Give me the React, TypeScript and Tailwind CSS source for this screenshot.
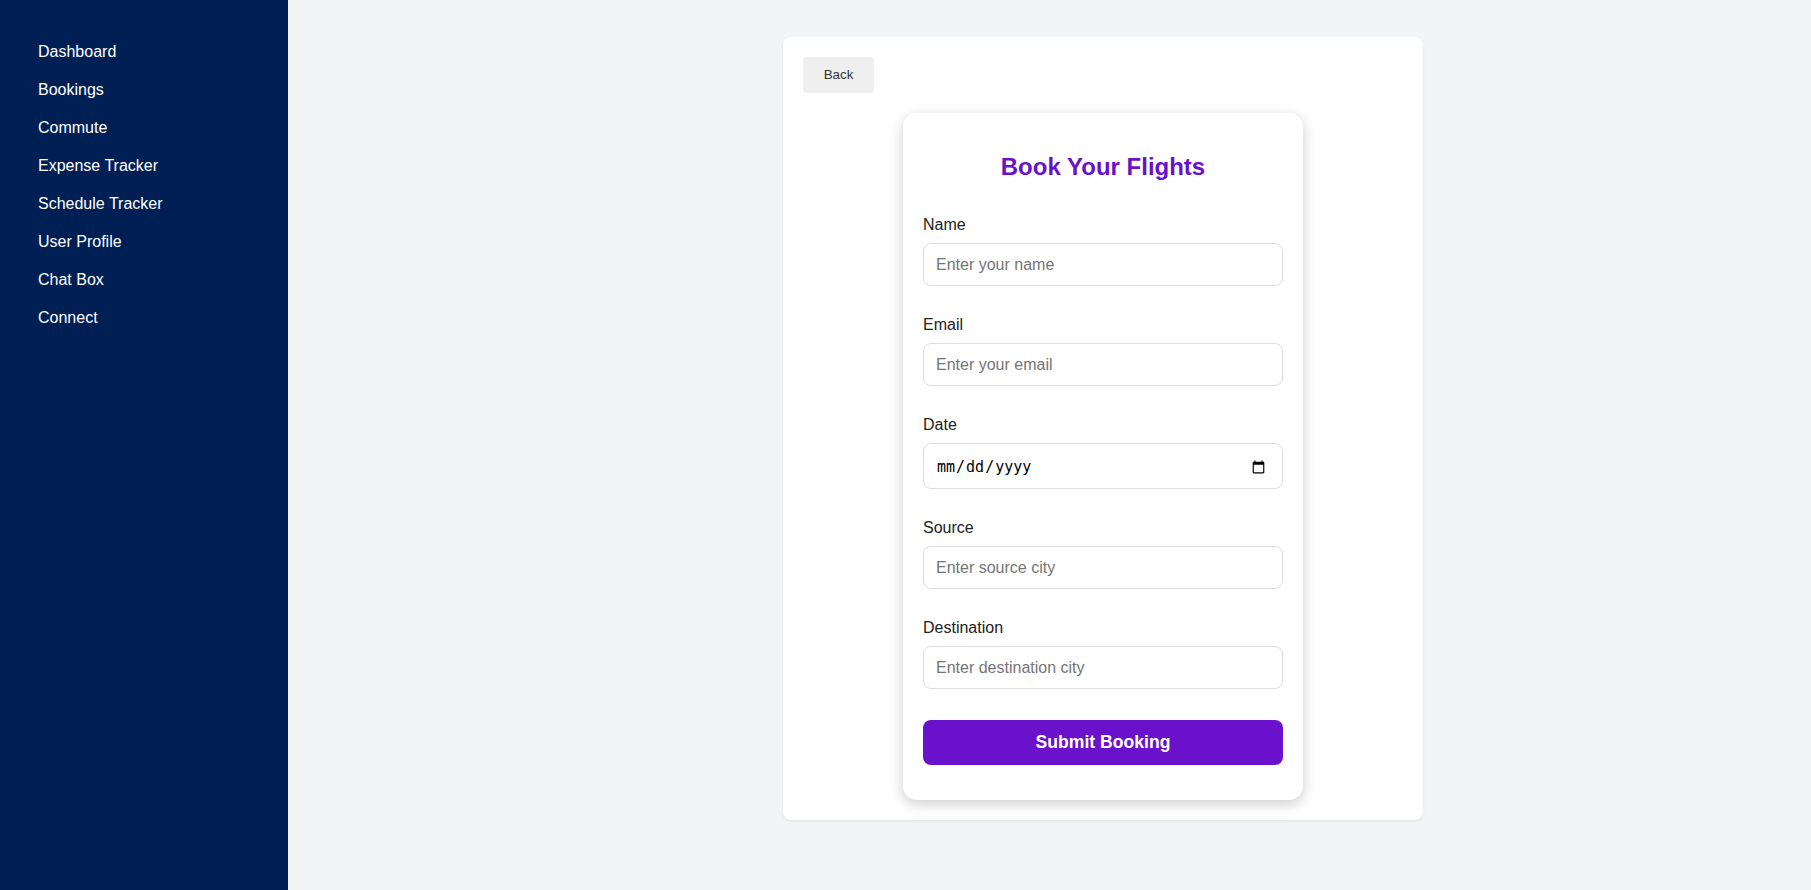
import React from "react";

const navItems = [
  "Dashboard",
  "Bookings",
  "Commute",
  "Expense Tracker",
  "Schedule Tracker",
  "User Profile",
  "Chat Box",
  "Connect",
];

function Field({
  label,
  placeholder,
  type = "text",
  last = false,
}: {
  label: string;
  placeholder?: string;
  type?: string;
  last?: boolean;
}) {
  const isDate = type === "date";
  return (
    <div className={last ? "" : "mb-[30px]"}>
      <label className="block text-[16px] leading-[18px] text-[#222] mb-[9px]">{label}</label>
      <input
        type={type}
        placeholder={placeholder}
        className={
          isDate
            ? "block w-full h-[46px] border border-[#ddd] rounded-lg pl-[12px] pr-[14px] pt-[3px] text-[15px] text-black outline-none [font-family:'DejaVu_Sans_Mono','Liberation_Mono',monospace]"
            : "block w-full h-[43px] border border-[#ddd] rounded-lg px-[12px] text-[16px] text-black placeholder:text-[#757575] outline-none"
        }
      />
    </div>
  );
}

export default function App() {
  return (
    <div className="flex w-full h-[890px] [font-family:'Liberation_Sans',Arial,sans-serif]">
      <aside className="w-[288px] shrink-0 bg-[#001f54] pt-[43px] pl-[38px]">
        <ul className="flex flex-col gap-[20px]">
          {navItems.map((n) => (
            <li key={n} className="text-white text-[16px] leading-[18px]">
              {n}
            </li>
          ))}
        </ul>
      </aside>
      <main className="flex-1 bg-[#f3f4f6] pt-[37px] pl-[495px]">
        <div className="w-[640px] bg-white rounded-lg shadow-[0_1px_3px_rgba(0,0,0,0.08)] p-5">
          <button className="w-[71px] h-[36px] bg-[#efefef] rounded text-[13.33px] text-[#333]">
            Back
          </button>
          <div className="mt-5 mx-auto w-[400px] bg-white rounded-[14px] shadow-[0_4px_14px_rgba(0,0,0,0.2)] px-[20px] pt-[40px] pb-[35px]">
            <h2 className="text-center text-[24px] leading-[28px] font-bold text-[#6a11cb] mb-[35px]">
              Book Your Flights
            </h2>
            <Field label="Name" placeholder="Enter your name" />
            <Field label="Email" placeholder="Enter your email" type="email" />
            <Field label="Date" type="date" />
            <Field label="Source" placeholder="Enter source city" />
            <Field label="Destination" placeholder="Enter destination city" last />
            <button className="mt-[31px] w-full h-[45px] bg-[#6a11cb] rounded-lg text-white font-bold text-[17.6px]">
              Submit Booking
            </button>
          </div>
        </div>
      </main>
    </div>
  );
}
